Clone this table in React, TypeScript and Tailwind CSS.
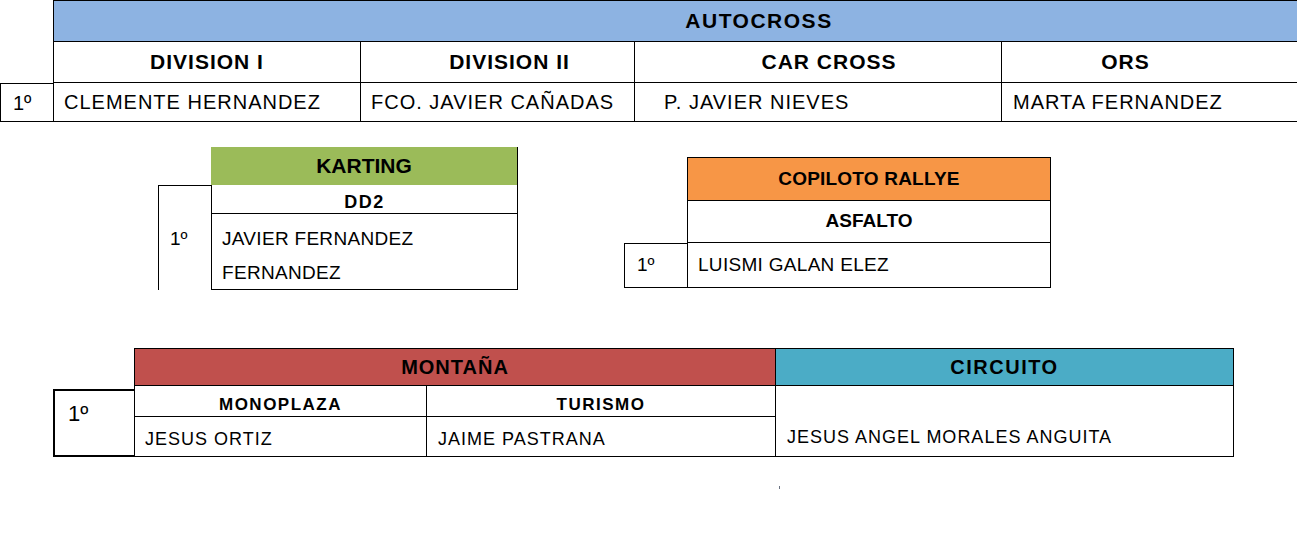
const headCell = "border-l border-b border-black flex items-center justify-center font-bold text-[21px] tracking-[1px]";
const nameCell = "border-l border-b border-black flex items-center text-[20px] tracking-[1px]";

function Autocross() {
  return (
    <div className="grid grid-cols-[53px_307px_274px_367px_296px] grid-rows-[42px_41px_39px]">
      <div />
      <div className="col-span-4 bg-[#8db3e2] border-t border-b border-l border-black flex items-center justify-center pl-[167px] font-bold text-[21px] tracking-[1.5px]">
        AUTOCROSS
      </div>

      <div />
      <div className={headCell}>DIVISION I</div>
      <div className={`${headCell} pl-[24px]`}>DIVISION II</div>
      <div className={`${headCell} pl-[22px]`}>CAR CROSS</div>
      <div className={`${headCell} pr-[48px]`}>ORS</div>

      <div className="border-l border-t border-b border-black flex items-center pl-[12px] text-[20px]">1º</div>
      <div className={`${nameCell} pl-[10px]`}>CLEMENTE HERNANDEZ</div>
      <div className={`${nameCell} pl-[10px]`}>FCO. JAVIER CAÑADAS</div>
      <div className={`${nameCell} pl-[29px]`}>P. JAVIER NIEVES</div>
      <div className={`${nameCell} pl-[11px]`}>MARTA FERNANDEZ</div>
    </div>
  );
}

function Karting() {
  return (
    <div className="ml-[158px] grid grid-cols-[53px_307px] grid-rows-[38px_29px_76px]">
      <div />
      <div className="bg-[#9bbb59] border-r border-black flex items-center justify-center font-bold text-[21px]">
        KARTING
      </div>
      <div className="row-span-2 border-l border-t border-black pl-[11px] pt-[42px] text-[19px] leading-[21px]">1º</div>
      <div className="border-l border-r border-b border-black flex items-end justify-center pb-[1px] font-bold text-[18px] tracking-[1.5px] leading-[20px]">
        DD2
      </div>
      <div className="border-l border-r border-b border-black pl-[10px] pt-[8px] text-[19px] tracking-[0.3px] leading-[34px]">
        JAVIER FERNANDEZ
        <br />
        FERNANDEZ
      </div>
    </div>
  );
}

function Copiloto() {
  return (
    <div className="ml-[106px] mt-[10px] grid grid-cols-[63px_364px] grid-rows-[44px_42px_45px]">
      <div />
      <div className="bg-[#f79646] border border-black flex items-center justify-center font-bold text-[19px] tracking-[0.2px]">
        COPILOTO RALLYE
      </div>
      <div />
      <div className="border-l border-r border-b border-black flex items-center justify-center font-bold text-[19px]">
        ASFALTO
      </div>
      <div className="border-l border-t border-b border-black flex items-center pl-[12px] text-[19px]">1º</div>
      <div className="border-l border-r border-b border-black flex items-center pl-[10px] text-[19px] tracking-[0.3px]">
        LUISMI GALAN ELEZ
      </div>
    </div>
  );
}

function Montana() {
  const sub = "border-l border-b border-black flex items-end justify-center pb-[1px] font-bold text-[17px] tracking-[1.5px] leading-[20px]";
  const name = "border-l border-b border-black flex items-center pt-[6px] text-[18px] tracking-[1px]";
  return (
    <div className="ml-[53px] mt-[58px] grid grid-cols-[81px_292px_349px_459px] grid-rows-[38px_31px_40px]">
      <div />
      <div className="col-span-2 bg-[#c0504d] border-t border-b border-l border-black flex items-center justify-center font-bold text-[20px] tracking-[1px]">
        MONTAÑA
      </div>
      <div className="bg-[#4bacc6] border border-black flex items-center justify-center font-bold text-[20px] tracking-[1.5px]">
        CIRCUITO
      </div>

      <div className="row-span-2 mt-[3px] border-l-2 border-t-2 border-b-2 border-black pl-[13px] pt-[10px] text-[22px] leading-[25px]">
        1º
      </div>
      <div className={sub}>MONOPLAZA</div>
      <div className={sub}>TURISMO</div>
      <div className="row-span-2 border-l border-r border-b border-black flex items-end pl-[11px] pb-[5px] text-[18px] tracking-[1px]">
        JESUS ANGEL MORALES ANGUITA
      </div>
      <div className={`${name} pl-[10px]`}>JESUS ORTIZ</div>
      <div className={`${name} pl-[11px]`}>JAIME PASTRANA</div>
    </div>
  );
}

export default function App() {
  return (
    <div className="w-[1297px] h-[546px] bg-white overflow-hidden text-black font-['Liberation_Sans',Arial,sans-serif]">
      <Autocross />
      <div className="flex items-start mt-[25px]">
        <Karting />
        <Copiloto />
      </div>
      <Montana />
      <div className="ml-[779px] mt-[29px] w-px h-[3px] bg-gray-500" />
    </div>
  );
}
